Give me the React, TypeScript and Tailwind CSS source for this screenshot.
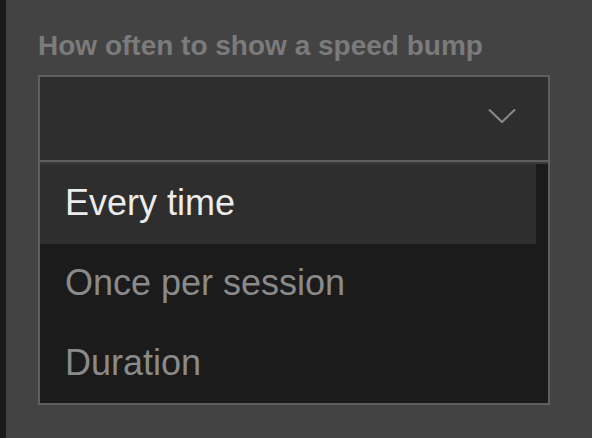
import { useState } from 'react';

const options = ['Every time', 'Once per session', 'Duration'];

export default function App() {
  const [selected] = useState(0);

  return (
    <div className="flex w-[592px] h-[438px] bg-[#1b1b1b] overflow-hidden" style={{ fontFamily: '"Liberation Sans", Arial, sans-serif' }}>
      <div className="w-[6px] shrink-0" />
      <div className="flex-1 bg-[#434343] pl-[32px] pr-[42px] pt-[30px]">
        <div className="text-[28px] leading-[32px] font-bold text-[#7b7b7b] mb-[13px]">
          How often to show a speed bump
        </div>

        <div className="h-[87px] border-2 border-[#5f5f5f] bg-[#2e2e2e] flex items-center justify-end pr-[32px] pb-[5px]">
          <svg width="28" height="16" viewBox="0 0 28 16" fill="none">
            <path d="M1 1.5 L14 14 L27 1.5" stroke="#8a8a8a" strokeWidth="2" />
          </svg>
        </div>

        <div className="border-2 border-t-0 border-[#5f5f5f] bg-[#1b1b1b] flex">
          <div className="flex-1 flex flex-col border-t-2 border-[#3a3a3a]">
            {options.map((opt, i) => (
              <div
                key={opt}
                className={
                  i === selected
                    ? 'h-[80px] flex items-center pl-[25px] pb-[3px] bg-[#2e2e2e] text-[36px] leading-[40px] text-[#ececec]'
                    : i === 2
                    ? 'h-[79px] flex items-center pl-[25px] pb-[2px] text-[36px] leading-[40px] text-[#8a8a8a]'
                    : 'h-[80px] flex items-center pl-[25px] pb-[3px] text-[36px] leading-[40px] text-[#8a8a8a]'
                }
              >
                {opt}
              </div>
            ))}
          </div>
          <div className="w-[12px] bg-[#1b1b1b] border-t-2 border-[#3a3a3a]" />
        </div>
      </div>
    </div>
  );
}
